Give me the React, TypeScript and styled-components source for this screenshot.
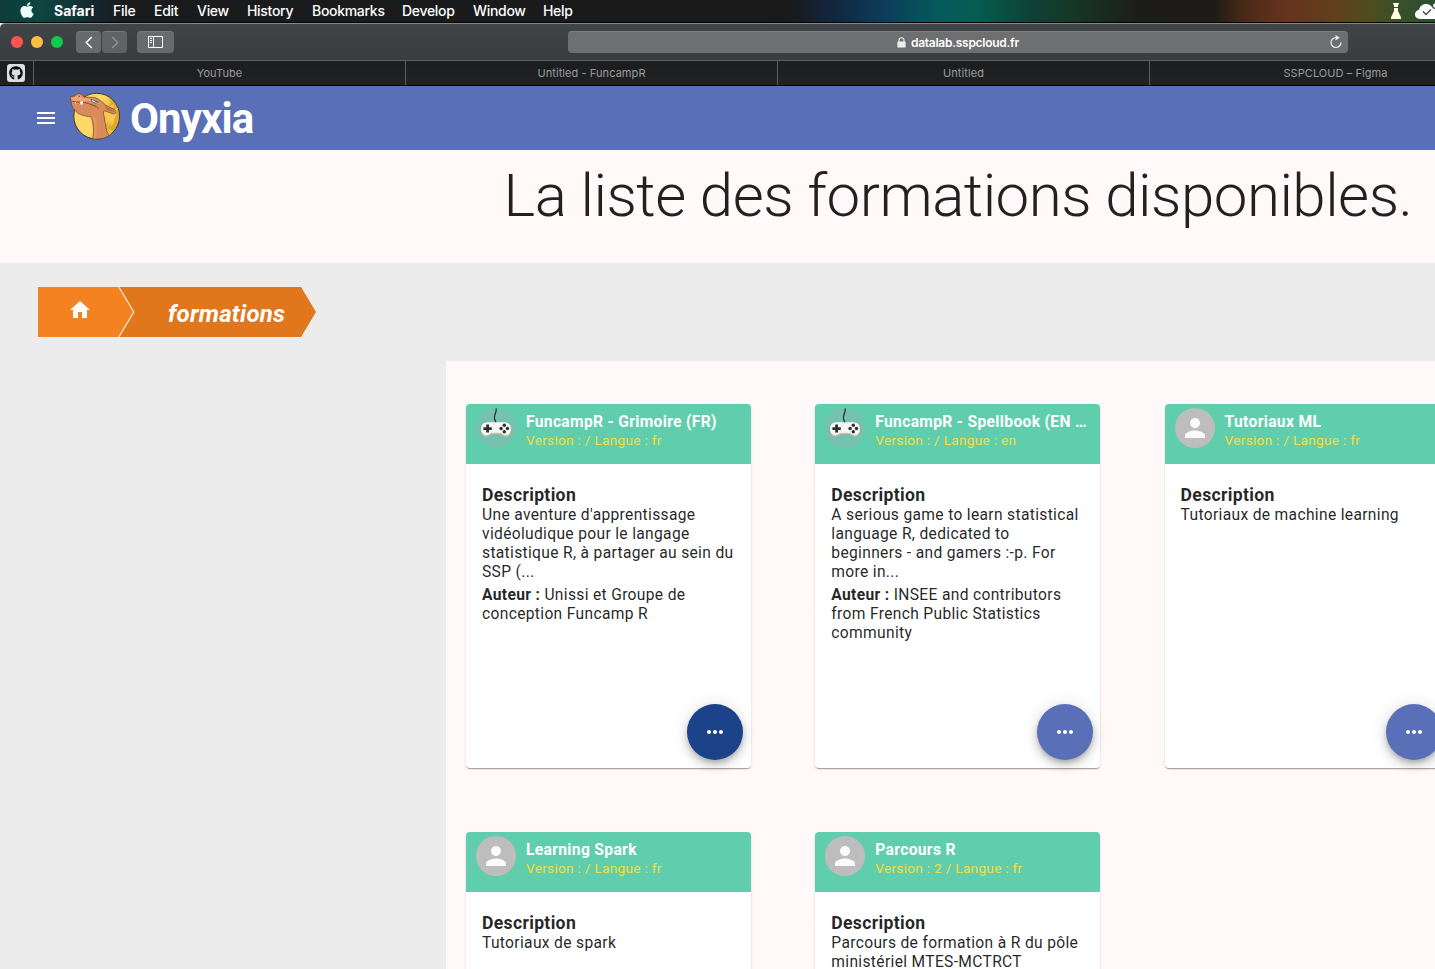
import React from "react";
import styled, { createGlobalStyle } from "styled-components";
import { FaApple, FaGithub } from "react-icons/fa";
import { MdMenu, MdHome, MdPerson, MdMoreHoriz } from "react-icons/md";

const GlobalStyle = createGlobalStyle`
  *, *::before, *::after { box-sizing: border-box; }
  html, body { margin: 0; padding: 0; overflow: hidden; }
  body { font-family: Roboto, "Liberation Sans", sans-serif; color: rgba(0, 0, 0, 0.87); }
  svg { display: block; flex: none; }
`;

const Screen = styled.div`
  width: 100vw;
  height: 100vh;
  overflow: hidden;
  display: flex;
  flex-direction: column;
  background: #ececec;
`;

const MenuBar = styled.div`
  flex: none;
  height: 23px;
  display: flex;
  align-items: center;
  padding: 0 0 0 20px;
  border-bottom: 1px solid #050505;
  color: #fff;
  font: 500 14px/22px Inter, sans-serif;
  background: linear-gradient(90deg,
    #0d3c3a 0, #0c4543 40px, #103838 70px, #14252c 95px, #1a1b1d 120px, #191919 790px,
    #14233a 825px, #0d3a58 880px, #04595c 935px, #075c52 975px, #0e4236 1030px,
    #173521 1080px, #1c1c19 1140px, #1e1c19 1215px, #4a2a17 1245px, #66331c 1285px,
    #60401d 1335px, #4f4c20 1370px, #39502a 1400px, #27502f 1435px);
`;

const AppleMark = styled(FaApple)`
  width: 14px;
  height: 18px;
  margin: -2px 20px 0 0;
  color: #effffd;
`;

const MenuItem = styled.span<{ $w: number; $bold?: boolean }>`
  width: ${(p) => p.$w}px;
  margin-right: 18px;
  white-space: nowrap;
  font-weight: ${(p) => (p.$bold ? 700 : 500)};
  letter-spacing: ${(p) => (p.$bold ? "0" : "-0.3px")};
`;

const StatusIcons = styled.div`
  display: flex;
  align-items: center;
  gap: 13px;
  margin-left: auto;
`;

const Toolbar = styled.div`
  flex: none;
  height: 38px;
  display: flex;
  align-items: center;
  padding: 0 0 0 11px;
  border-top: 1px solid #858786;
  border-bottom: 1px solid #5d5f60;
  border-top-left-radius: 5px;
  background: linear-gradient(#414547, #3a3c3e);
`;

const Light = styled.span<{ $c: string }>`
  width: 12px;
  height: 12px;
  margin-right: 8px;
  border-radius: 50%;
  background: ${(p) => p.$c};
`;

const ToolButton = styled.span<{ $w: number; $dim?: boolean }>`
  width: ${(p) => p.$w}px;
  height: 22px;
  display: flex;
  align-items: center;
  justify-content: center;
  border-radius: 4px;
  border-top: 1px solid #777a7b;
  background: ${(p) => (p.$dim ? "#606364" : "#686b6c")};
`;

const NavGroup = styled.div`
  display: flex;
  gap: 1px;
  margin: 0 10px 0 5px;
`;

const AddressBar = styled.div`
  width: 780px;
  height: 22px;
  margin-left: 394px;
  display: flex;
  align-items: center;
  border-radius: 4px;
  border-top: 1px solid #7d7f80;
  background: #6d6f70;
  color: #fff;
  padding: 0 6px 0 329px;
  font: 600 12px/21px Inter, sans-serif;
  letter-spacing: -0.27px;
`;

const Host = styled.span`
  flex: 1;
  margin-left: 5px;
`;

const ReloadIcon = styled.svg`
  width: 12px;
  height: 14px;
  margin-top: -2px;
`;

const TabStrip = styled.div`
  flex: none;
  height: 25px;
  display: flex;
  background: linear-gradient(#1c1d1f, #202123);
  border-bottom: 1px solid #000;
`;

const PinnedTab = styled.div`
  flex: none;
  width: 34px;
  padding: 3px 0 0 7px;
  border-right: 1px solid #5c5d5e;
`;

const Favicon = styled.div`
  width: 18px;
  height: 18px;
  padding: 2px;
  border-radius: 3px;
  background: #dcdedf;
  color: #0b0b0b;
`;

const Tab = styled.div`
  flex: none;
  width: 372px;
  border-right: 1px solid #5c5d5e;
  color: #9a9b9c;
  text-align: center;
  font: 400 11px/24px Inter, sans-serif;
  letter-spacing: 0.07px;
`;

const Header = styled.header`
  flex: none;
  height: 64px;
  display: flex;
  align-items: center;
  padding-left: 34px;
  background: #596fb7;
  color: #fff;
`;

const Logo = styled.svg`
  width: 54px;
  height: 52px;
  margin: -5px 0 0 12px;
`;

const Brand = styled.span`
  margin: 2px 0 0 6px;
  font-size: 42px;
  font-weight: 700;
  line-height: 48px;
  letter-spacing: -0.9px;
`;

const Page = styled.main`
  flex: none;
  width: 1916px;
`;

const Hero = styled.section`
  height: 113px;
  padding-top: 10px;
  background: #fffaf9;
`;

const Title = styled.h1`
  margin: 0;
  text-align: center;
  font-size: 60px;
  font-weight: 300;
  line-height: 72px;
  letter-spacing: -0.5px;
`;

const Breadcrumb = styled.nav`
  display: flex;
  height: 98px;
  padding: 24px 38px;
`;

const HomeCrumb = styled.a`
  width: 96px;
  height: 50px;
  display: flex;
  justify-content: center;
  padding: 11px 12px 0 0;
  color: #fff;
  background: #f58220;
  clip-path: polygon(0 0, 80.2px 0, 95.2px 50%, 80.2px 100%, 0 100%);
`;

const Crumb = styled.a`
  width: 197px;
  height: 50px;
  margin-left: -15px;
  padding-left: 49px;
  color: #fff;
  background: #e0771d;
  font-size: 24px;
  font-style: italic;
  font-weight: 700;
  line-height: 54px;
  letter-spacing: 0.25px;
  clip-path: polygon(0.5px 0, 182px 0, 100% 50%, 182px 100%, 0.5px 100%, 15.5px 50%);
`;

const CrumbTrail = styled.div`
  display: flex;
  height: 50px;
  background: linear-gradient(90deg, #fff3e8 0 110px, transparent 110px);
`;

const Catalog = styled.section`
  display: grid;
  grid-template-columns: repeat(3, 285px);
  gap: 64px 64.3px;
  width: 1088px;
  margin-left: 446px;
  padding: 43px 20px;
  background: #fffaf9;
`;

const Card = styled.article`
  height: 364px;
  display: flex;
  flex-direction: column;
  border-radius: 4px;
  background: #fff;
  box-shadow: 0 2px 1px -1px rgba(0, 0, 0, 0.2), 0 1px 1px 0 rgba(0, 0, 0, 0.14), 0 1px 3px 0 rgba(0, 0, 0, 0.12);
`;

const CardHead = styled.div`
  flex: none;
  height: 60px;
  display: flex;
  gap: 10px;
  padding: 4px 10px;
  border-radius: 4px 4px 0 0;
  background: #60cead;
`;

const Avatar = styled.div<{ $game?: boolean }>`
  flex: none;
  width: 40px;
  height: 40px;
  display: flex;
  align-items: center;
  justify-content: center;
  border-radius: 50%;
  color: #fafafa;
  background: ${(p) => (p.$game ? "#76c2af" : "#bdbdbd")};
`;

const HeadText = styled.div`
  min-width: 0;
  padding-top: 5px;
`;

const CardTitle = styled.div`
  white-space: nowrap;
  color: #fff;
  font-size: 15.6px;
  font-weight: 700;
  line-height: 19px;
  letter-spacing: 0.34px;
`;

const CardMeta = styled.div`
  color: #f8dc3c;
  font-size: 13.6px;
  line-height: 17px;
  letter-spacing: 0.3px;
`;

const CardBody = styled.div`
  flex: 1;
  padding: 21px 16px 0;
  font-size: 15.6px;
  line-height: 19px;
  letter-spacing: 0.33px;
`;

const Heading = styled.h2`
  margin: 0 0 1px;
  font-size: 17.6px;
  font-weight: 700;
  line-height: 20px;
  letter-spacing: 0.32px;
`;

const Line = styled.div`
  white-space: nowrap;
`;

const Author = styled.div`
  margin-top: 4px;
`;

const CardActions = styled.div`
  display: flex;
  justify-content: flex-end;
  padding: 8px 7.7px 8px 8px;
`;

const Fab = styled.button<{ $active?: boolean }>`
  width: 56px;
  height: 56px;
  display: flex;
  align-items: center;
  justify-content: center;
  padding: 0;
  border: 0;
  border-radius: 50%;
  color: #fff;
  background: ${(p) => (p.$active ? "#1c428a" : "#596fb7")};
  box-shadow: 0 3px 5px -1px rgba(0, 0, 0, 0.2), 0 6px 10px 0 rgba(0, 0, 0, 0.14), 0 1px 18px 0 rgba(0, 0, 0, 0.12);
`;

const menu: [string, number][] = [
  ["Safari", 41], ["File", 23], ["Edit", 25], ["View", 32], ["History", 47],
  ["Bookmarks", 72], ["Develop", 53], ["Window", 52], ["Help", 30],
];

const tabs = ["YouTube", "Untitled - FuncampR", "Untitled", "SSPCLOUD – Figma"];

type Course = {
  title: string;
  meta: string;
  lines: string[];
  author?: string[];
  game?: boolean;
  active?: boolean;
};

const courses: Course[] = [
  {
    title: "FuncampR - Grimoire (FR)",
    meta: "Version : / Langue : fr",
    lines: ["Une aventure d'apprentissage", "vidéoludique pour le langage", "statistique R, à partager au sein du", "SSP (..."],
    author: ["Unissi et Groupe de", "conception Funcamp R"],
    game: true,
    active: true,
  },
  {
    title: "FuncampR - Spellbook (EN …",
    meta: "Version : / Langue : en",
    lines: ["A serious game to learn statistical", "language R, dedicated to", "beginners - and gamers :-p. For", "more in..."],
    author: ["INSEE and contributors", "from French Public Statistics", "community"],
    game: true,
  },
  { title: "Tutoriaux ML", meta: "Version : / Langue : fr", lines: ["Tutoriaux de machine learning"] },
  { title: "Learning Spark", meta: "Version : / Langue : fr", lines: ["Tutoriaux de spark"] },
  {
    title: "Parcours R",
    meta: "Version : 2 / Langue : fr",
    lines: ["Parcours de formation à R du pôle", "ministériel MTES-MCTRCT"],
  },
];

const Gamepad = () => (
  <svg width="40" height="40" viewBox="0 0 40 40">
    <path d="M20.2 0.3C20.8 4.5 17.8 7 18.5 10.5C18.8 12.3 19.6 12.3 19.8 15" fill="none" stroke="#27323b" strokeWidth="1.3" />
    <g transform="translate(0 -0.7)">
      <path d="M11.5 16H28.5C32.5 16 34.9 19 34.9 22.6C34.9 26.5 32.7 29.2 29.8 29.2C27 29.2 25.8 26.8 24 26.8H16C14.2 26.8 13 29.2 10.2 29.2C7.3 29.2 5.1 26.5 5.1 22.6C5.1 19 7.5 16 11.5 16Z" fill="#cfc2a6" />
      <path d="M11.5 14.9H28.5C32.5 14.9 34.9 17.7 34.9 21.3C34.9 25.2 32.7 27.9 29.8 27.9C27 27.9 25.8 25.5 24 25.5H16C14.2 25.5 13 27.9 10.2 27.9C7.3 27.9 5.1 25.2 5.1 21.3C5.1 17.7 7.5 14.9 11.5 14.9Z" fill="#f7f7f6" />
      <path d="M10.2 17.2H13V19.9H15.8V22.6H13V25.3H10.2V22.6H7.4V19.9H10.2Z" fill="#2c2f31" />
      <g fill="#2c2f31">
        <circle cx="28.3" cy="18" r="1.7" />
        <circle cx="28.3" cy="24.4" r="1.7" />
        <circle cx="25.1" cy="21.2" r="1.7" />
        <circle cx="31.5" cy="21.2" r="1.7" />
      </g>
    </g>
  </svg>
);

const DragonLogo = () => (
  <Logo viewBox="0 0 54 52">
    <defs>
      <linearGradient id="sun" x1="0" y1="0" x2="1" y2="0.45">
        <stop offset="0.62" stopColor="#ffd966" />
        <stop offset="0.78" stopColor="#dba92c" />
      </linearGradient>
    </defs>
    <circle cx="26.7" cy="26.2" r="22.9" fill="url(#sun)" stroke="#463a2d" strokeWidth="1" />
    <path d="M33 9L41 12L38 17L44 14L43 20L48 18L43 34L40 37L42 31L37 38L39 31L35 35L33 15Z" fill="#f6ca4e" />
    <path d="M35 47L40 43L38 47L43 41L38 39L33 44Z" fill="#f0c146" />
    <path d="M0.7 6.5L3.5 6.3C5.6 5.8 6.5 3.4 8.8 3.5L11.8 4.2L14.2 7.2C18 7.5 22 7 25.5 7.8C29.5 9.3 33 12.5 35.4 15L44.3 19.4C46.6 21 46.3 23.6 44.2 24L34 20.6C33 22.5 33.6 24.2 34.2 26.5C35.5 34 35.9 41 38.9 45.8C34.8 48.4 28.5 49.8 22.8 48.7C24.4 42 23.4 34 21.6 28.4C21 26.5 19.4 26.5 17 26.3C12 25.6 8 23.8 5.2 20.8C2.6 17.6 1 14.3 1.2 11.7C0.8 10 0.7 8.5 0.7 6.5Z" fill="#d98b5b" stroke="#684332" strokeWidth="0.7" />
    <path d="M1.2 7L4 7.2L8.6 4.3L12.7 7.8L23.5 8.4L31 13.2L27.8 14.2L20 11L4.5 11.5L1.6 10.6Z" fill="#f3a073" />
    <path d="M26.8 28C26.3 37 27.4 43.5 26.2 48.6C25.5 48.8 24.5 48.4 23.4 48.2C25 39 24.3 32 22.6 27Z" fill="#eaa06d" opacity=".6" />
    <path d="M35 16L43.4 20L44 22L36.2 19.5Z" fill="#b96f48" />
    <path d="M1.7 11.2C8 13 13 11 18.4 13.6C22.5 15.6 26 15 28.4 18.5" fill="none" stroke="#77452f" strokeWidth="0.9" />
    <path d="M10 11.5L13.3 11.3L12 15.2L10.7 14.4ZM4.7 11.7L6.2 12.3L5.7 13.7Z" fill="#fff" />
    <path d="M20.8 9.2L28.8 12.1L25.8 13.3L22.3 12Z" fill="#e7f2f1" stroke="#49433f" strokeWidth="0.7" />
    <circle cx="26" cy="11.6" r="1" fill="#3d86a0" />
    <path d="M8.2 5.8L10 6.7" stroke="#7c3f2b" strokeWidth="0.9" />
  </Logo>
);

const CourseCard = ({ course }: { course: Course }) => (
  <Card>
    <CardHead>
      <Avatar $game={course.game}>{course.game ? <Gamepad /> : <MdPerson size={30} />}</Avatar>
      <HeadText>
        <CardTitle>{course.title}</CardTitle>
        <CardMeta>{course.meta}</CardMeta>
      </HeadText>
    </CardHead>
    <CardBody>
      <Heading>Description</Heading>
      {course.lines.map((l) => <Line key={l}>{l}</Line>)}
      {course.author && (
        <Author>
          {course.author.map((l, i) => (
            <Line key={l}>{i === 0 && <b>Auteur : </b>}{l}</Line>
          ))}
        </Author>
      )}
    </CardBody>
    <CardActions>
      <Fab $active={course.active} aria-label="Options"><MdMoreHoriz size={24} /></Fab>
    </CardActions>
  </Card>
);

export default function App() {
  return (
    <Screen>
      <GlobalStyle />
      <MenuBar>
        <AppleMark />
        {menu.map(([label, w], i) => <MenuItem key={label} $w={w} $bold={i === 0}>{label}</MenuItem>)}
        <StatusIcons>
          <svg width="12" height="18" viewBox="0 0 12 18" fill="#fffbe2">
            <path d="M3 1H9V2.6H8V5H4V2.6H3ZM4 6H8V9L11 15.2V17H1V15.2L4 9Z" />
          </svg>
          <svg width="20" height="18" viewBox="0 0 20 18">
            <path d="M5 17C2 17 0 15 0 12.3C0 9.6 2 8 4 7.7C4.8 4.5 7.3 2 11 2C14.4 2 16 3.5 17 5H20V17Z" fill="#fff" />
            <path d="M8 9.5L11 12.5L16 7.5" fill="none" stroke="#31512c" strokeWidth="1.3" />
            <circle cx="20.5" cy="3.5" r="3" fill="#fff" stroke="#31512c" strokeWidth="1.2" />
          </svg>
        </StatusIcons>
      </MenuBar>
      <Toolbar>
        <Light $c="#ff544d" />
        <Light $c="#ffbd41" />
        <Light $c="#0bcb4b" />
        <NavGroup>
          <ToolButton $w={25}>
            <svg width="8" height="13" viewBox="0 0 8 13" fill="none" stroke="#fff" strokeWidth="1.5"><path d="M6.8 1L1.3 6.5L6.8 12" /></svg>
          </ToolButton>
          <ToolButton $w={25} $dim>
            <svg width="8" height="13" viewBox="0 0 8 13" fill="none" stroke="#929495" strokeWidth="1.3"><path d="M1.2 1L6.7 6.5L1.2 12" /></svg>
          </ToolButton>
        </NavGroup>
        <ToolButton $w={37}>
          <svg width="15" height="14" viewBox="0 0 15 14" fill="none" stroke="#fff"><path d="M0.5 0.5H14.5V11.5H0.5ZM5.5 0.5V11.5M2 2.5H4M2 4.5H4M2 6.5H4" /></svg>
        </ToolButton>
        <AddressBar>
          <svg width="9" height="11" viewBox="0 0 9 11"><path d="M2 5V3.2C2 0 7 0 7 3.2V5" fill="none" stroke="#eee" strokeWidth="1.1" /><rect x="0.4" y="4.6" width="8.2" height="6" rx="0.7" fill="#eee" /></svg>
          <Host>datalab.sspcloud.fr</Host>
          <ReloadIcon viewBox="0 0 12 14"><path d="M6 2.5A5 5 0 1 0 11 7.5" fill="none" stroke="#eee" strokeWidth="1.2" /><path d="M5.5 0L9.6 2.7L5.5 5.4Z" fill="#eee" /></ReloadIcon>
        </AddressBar>
      </Toolbar>
      <TabStrip>
        <PinnedTab><Favicon><FaGithub size={14} /></Favicon></PinnedTab>
        {tabs.map((t) => <Tab key={t}>{t}</Tab>)}
      </TabStrip>
      <Header>
        <MdMenu size={24} />
        <DragonLogo />
        <Brand>Onyxia</Brand>
      </Header>
      <Page>
        <Hero><Title>La liste des formations disponibles.</Title></Hero>
        <Breadcrumb>
          <CrumbTrail>
            <HomeCrumb><MdHome size={24} /></HomeCrumb>
            <Crumb>formations</Crumb>
          </CrumbTrail>
        </Breadcrumb>
        <Catalog>
          {courses.map((c) => <CourseCard key={c.title} course={c} />)}
        </Catalog>
      </Page>
    </Screen>
  );
}
